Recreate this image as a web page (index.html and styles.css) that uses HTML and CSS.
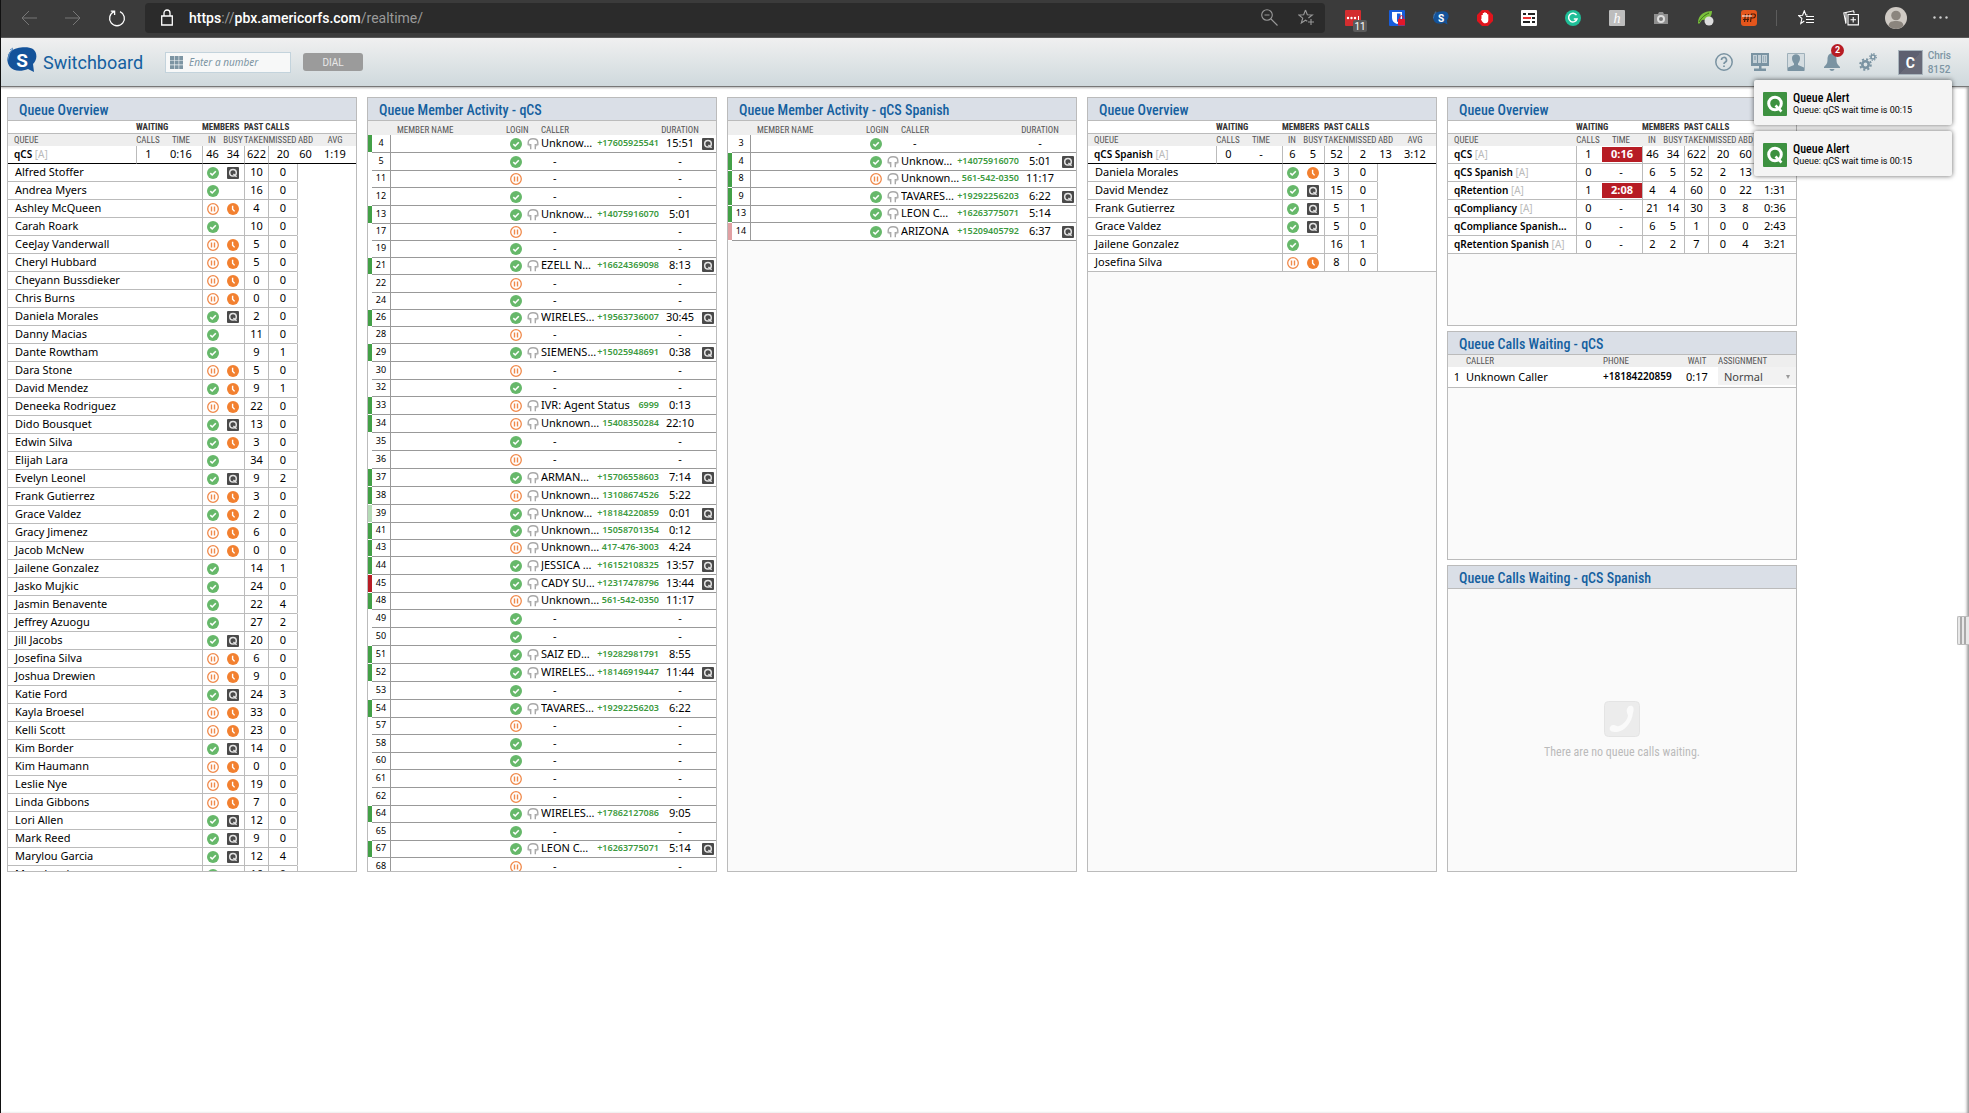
FILE: index.html
```html
<!DOCTYPE html>
<html lang="en">

<head>
    <meta charset="UTF-8">
    <meta name="viewport" content="width=device-width, initial-scale=1.0">
    <title>Switchboard</title>
    <link rel="stylesheet" href="styles.css">
</head>

<body>
    <!-- Shared icons -->
    <svg class="icon-defs" width="0" height="0" aria-hidden="true">
        <symbol id="i-check" viewBox="0 0 12 12">
            <circle cx="6" cy="6" r="6" fill="#66b86a" />
            <path d="M3.3 6.2 5.2 8 8.8 4.3" fill="none" stroke="#fff" stroke-width="1.6" />
        </symbol>
        <symbol id="i-pause" viewBox="0 0 12 12">
            <circle cx="6" cy="6" r="5.3" fill="#fff" stroke="#f08a4b" stroke-width="1.3" />
            <path d="M4.5 3.5v5M7.5 3.5v5" stroke="#f08a4b" stroke-width="1.4" />
        </symbol>
        <symbol id="i-clock" viewBox="0 0 12 12">
            <circle cx="6" cy="6" r="6" fill="#f28030" />
            <path d="M5.6 2.8v3.4l2 2.2" fill="none" stroke="#fff" stroke-width="1.4" />
        </symbol>
        <symbol id="i-queue" viewBox="0 0 12 12">
            <rect width="12" height="12" rx="1" fill="#4a4a4a" />
            <circle cx="6" cy="5.8" r="3.3" fill="none" stroke="#e4e4e4" stroke-width="1.5" />
            <path d="M6.4 7 9.6 9.8" stroke="#e4e4e4" stroke-width="1.4" />
        </symbol>
        <symbol id="i-headset" viewBox="0 0 12 12">
            <path d="M3.7 11.2V6.6H1.2V4.5C1.2 2 3 .8 6 .8s4.8 1.2 4.8 3.7v2.1H8.3v4.6" fill="none" stroke="#a8a8a8" stroke-width="1.4" />
            <path d="M2 5.5v2.3h1.5M10 5.5v2.3H8.5" fill="none" stroke="#bbb" stroke-width="1" />
        </symbol>
        <symbol id="i-alert" viewBox="0 0 24 24">
            <rect width="24" height="24" rx="1" fill="#3d9140" />
            <circle cx="12" cy="11.5" r="6.3" fill="none" stroke="#fff" stroke-width="3" />
            <path d="M12.5 13.5 18.5 19.5" stroke="#fff" stroke-width="2.6" />
        </symbol>
        <symbol id="i-bubble" viewBox="0 0 30 26">
            <path d="M4 4C9 0 21-1 26 2c4 3 5 10 0 15l1 8-6-3C14 25 6 24 3 20-1 15 0 8 4 4z" fill="#14539a" />
            <path d="M1 8l5-6M.5 14 3 5M3 3l3-2" stroke="#5b8cc0" stroke-width="1" />
        </symbol>
    </svg>

    <div class="browser-bar">
        <button class="nav-button" aria-label="Back"><svg width="16" height="16" viewBox="0 0 16 16" fill="none" stroke="#777"><path d="M16 8H1M8 1 1 8l7 7" /></svg></button>
        <button class="nav-button" aria-label="Forward"><svg width="16" height="16" viewBox="0 0 16 16" fill="none" stroke="#777"><path d="M0 8h15M8 1l7 7-7 7" /></svg></button>
        <button class="nav-button reload" aria-label="Reload"><svg width="18" height="18" viewBox="0 0 18 18" fill="none" stroke="#fff" stroke-width="1.3"><path d="M6 2.6A7.4 7.4 0 1 0 12 2.6M6.6 6V2.2H2.8" /></svg></button>
        <div class="address">
            <svg width="12" height="17" viewBox="0 0 12 17" fill="none" stroke="#fff" stroke-width="1.3"><path d="M.7 7h10.6v9H.7zM3 7V4a3 3 0 0 1 6 0v3" /></svg>
            <span class="url"><b>https</b>://<b>pbx.americorfs.com</b>/realtime/</span>
            <svg width="17" height="17" viewBox="0 0 17 17" fill="none" stroke="#999" stroke-width="1.1"><circle cx="6" cy="6" r="5.3" /><path d="M3.5 6h5M10 10l6.5 6.5" /></svg>
            <svg width="17" height="17" viewBox="0 0 17 17" fill="none" stroke="#999" stroke-width="1.1"><path d="M7.5 1 9.3 5.8l5 .2-3.9 3M7.5 1 5.7 5.8.8 6l3.9 3.1L3.3 14l4.2-2.8 1.8 1.1M13 10v6M10 13h6" /></svg>
        </div>
        <div class="extensions">
            <button aria-label="Passwords"><svg width="22" height="22" viewBox="0 0 22 22"><rect width="16" height="16" rx="1" fill="#d32d2f" /><g fill="#fff"><circle cx="3" cy="8" r="1.2" /><circle cx="6.5" cy="8" r="1.2" /><circle cx="10" cy="8" r="1.2" /><path d="M13 6h1v4h-1z" /></g><rect x="8" y="10" width="14" height="12" rx="2" fill="#5a5a5a" /><text x="15" y="20" class="ext-count">11</text></svg></button>
            <button aria-label="Vault"><svg width="16" height="16" viewBox="0 0 16 16"><rect width="16" height="16" rx="1" fill="#175ddc" /><path d="M3 2h10v6c0 3-2 5-5 6-3-1-5-3-5-6z" fill="#fff" /><path d="M8 3.5h3.5V8c0 2-1 3-3.5 4z" fill="#175ddc" /><rect x="9" y="9" width="7" height="6.5" fill="#e3172a" /><path d="M10.7 9V7.5a1.8 1.8 0 0 1 3.6 0V9" fill="none" stroke="#e3172a" /></svg></button>
            <button aria-label="Switchboard"><svg width="16" height="14" viewBox="0 0 30 26"><use href="#i-bubble" /><text x="15" y="20" class="bubble-letter">S</text></svg></button>
            <button aria-label="Blocker"><svg width="16" height="16" viewBox="0 0 16 16"><path d="M5 0h6l5 5v6l-5 5H5l-5-5V5z" fill="#e0141c" /><path d="M4.5 8.5V5h1.3V3h1.4v-.8h1.4V3H10v1.3h1.3v6c0 2-1.2 3-3 3s-2.6-.7-4.3-3.8z" fill="#fff" /></svg></button>
            <button aria-label="Reader"><svg width="16" height="16" viewBox="0 0 16 16"><rect width="16" height="16" rx="1" fill="#fff" /><path d="M2 4h3M7 4h7M2 12h7M11 12h3" stroke="#222" stroke-width="2" /><path d="M2 8h8" stroke="#e33" stroke-width="2" /><path d="M11 8h3" stroke="#222" stroke-width="2" /></svg></button>
            <button aria-label="Writing"><svg width="16" height="16" viewBox="0 0 16 16"><circle cx="8" cy="8" r="8" fill="#1fbf98" /><path d="M11.5 5.2A4.3 4.3 0 1 0 12 9H8.8" fill="none" stroke="#fff" stroke-width="1.5" /></svg></button>
            <button aria-label="Coupons"><svg width="16" height="16" viewBox="0 0 16 16"><rect width="16" height="16" rx="1" fill="#bdbdbd" /><text x="8" y="13" class="coupon-letter">h</text></svg></button>
            <button aria-label="Capture"><svg width="16" height="16" viewBox="0 0 16 16" fill="#8f8f8f"><path d="M1 4h4l1-2h4l1 2h4v10H1z" /><circle cx="8" cy="9" r="4" fill="#ddd" /><circle cx="8" cy="9" r="2" fill="#777" /></svg></button>
            <button aria-label="Leaf"><svg width="17" height="16" viewBox="0 0 17 16"><path d="M1 13C1 5 7 1 15 1c0 6-4 9-10 9l-3 4z" fill="#7ac03c" /><path d="M2 12C5 7 8 5 12 3" stroke="#3b6b1c" fill="none" /><circle cx="12" cy="11" r="4.5" fill="#ddd" /></svg></button>
            <button aria-label="Proxy"><svg width="16" height="16" viewBox="0 0 16 16"><rect width="16" height="16" rx="3" fill="#e4561c" /><path d="M4.5 4 3.5 12M7.5 4 6.5 12M2 9.5h6M9.5 12l1-8h2.5c2 0 2 4-1 4h-2" stroke="#4a1c08" stroke-width="1.2" fill="none" /><path d="M1 6h10" stroke="#fff" /></svg></button>
        </div>
        <div class="browser-tools">
            <button aria-label="Favorites"><svg width="16" height="15" viewBox="0 0 16 15" fill="none" stroke="#fff" stroke-width="1.1"><path d="M9.5 5 7.8 5 6.3.8 4.6 5.2.5 5.5l3.4 3L2.8 13.5l3.5-2.5M8 6.5h8M8 9.5h8M8 12.5h8" /></svg></button>
            <button aria-label="Collections"><svg width="16" height="16" viewBox="0 0 16 16" fill="none" stroke="#fff" stroke-width="1.1"><path d="M5 4.5h10.4v10.4H5zM10.2 7v5.5M7.5 9.7H13M3.5 12.5 2.8 13 .8 3 10.6.8l.6 2.5M3 13V2.5" /></svg></button>
            <button aria-label="Profile"><svg width="22" height="22" viewBox="0 0 22 22"><circle cx="11" cy="11" r="11" fill="#cfcac4" /><circle cx="11" cy="8.5" r="4.8" fill="#8b857e" /><path d="M3.5 19C4 14.5 7 14 11 14s7 .5 7.5 5a11 11 0 0 1-15 0z" fill="#8b857e" /></svg></button>
            <button aria-label="More"><svg width="15" height="3" viewBox="0 0 15 3" fill="#ccc"><circle cx="1.5" cy="1.5" r="1.2" /><circle cx="7.5" cy="1.5" r="1.2" /><circle cx="13.5" cy="1.5" r="1.2" /></svg></button>
        </div>
    </div>

    <header class="app-header">
        <svg class="logo" width="30" height="26" viewBox="0 0 30 26"><use href="#i-bubble" /><text x="15" y="20" class="bubble-letter">S</text></svg>
        <h1>Switchboard</h1>
        <label class="number-box">
            <svg width="13" height="13" viewBox="0 0 13 13" fill="#7d95a3"><path d="M0 0h4v4H0zM4.6 0h4v4h-4zM9.2 0h3.8v4H9.2zM0 4.6h4v4H0zM4.6 4.6h4v4h-4zM9.2 4.6h3.8v4H9.2zM0 9.2h4V13H0zM4.6 9.2h4V13h-4zM9.2 9.2h3.8V13H9.2z" /></svg>
            <input type="text" placeholder="Enter a number" aria-label="Enter a number">
        </label>
        <button class="dial-button">DIAL</button>
        <div class="header-tools">
            <button aria-label="Help"><svg width="18" height="18" viewBox="0 0 18 18" fill="none" stroke="#7a93a2" stroke-width="1.5"><circle cx="9" cy="9" r="8.2" /><path d="M6.5 7a2.5 2.5 0 1 1 3.6 2.2C9.3 9.6 9 10 9 11M9 12.4v1.5" stroke-width="1.7" /></svg></button>
            <button aria-label="Display"><svg width="18" height="18" viewBox="0 0 18 18" fill="#7a93a2"><path d="M0 0h18v13H0zM8 13h2.5v3H8zM3 15.5h12V18H3z" /><path d="M2 2h4v8H2zM7 2h3v8H7zM11 2h5v8h-5z" fill="#c3cfd6" /><path d="M3 4h2M3 6h2M12 4h1M14 4h1M12 6h1M14 6h1M12 8h1M14 8h1" stroke="#7a93a2" /></svg></button>
            <button aria-label="Contacts"><svg width="18" height="18" viewBox="0 0 18 18"><path d="M.5.5h17v17H.5z" fill="#d5dde1" stroke="#9fb0ba" /><path d="M5 5c0-5 8-5 8 0 0 3-1 4-2 5.5v1.5l6 2.5V18H1v-3.5L7 12v-1.5C6 9 5 8 5 5z" fill="#7a93a2" /></svg></button>
            <button class="bell" aria-label="Alerts"><svg width="16" height="18" viewBox="0 0 16 18" fill="#7a93a2"><path d="M8 0c3.5 1 4.5 3 4.5 6.5 0 4 1 5 3.5 7.5v1H0v-1c2.5-2.5 3.5-3.5 3.5-7.5C3.5 3 4.5 1 8 0zM5.5 16h5c-.5 2.5-4.5 2.5-5 0z" /></svg><span class="badge">2</span></button>
            <button aria-label="Settings"><svg width="18" height="18" viewBox="0 0 18 18" fill="none" stroke="#7a93a2"><circle cx="6.5" cy="11.5" r="3.2" stroke-width="2.6" /><circle cx="6.5" cy="11.5" r="5.3" stroke-width="2" stroke-dasharray="2.1 2.06" /><circle cx="14" cy="4" r="2" stroke-width="1.6" /><circle cx="14" cy="4" r="3.3" stroke-width="1.2" stroke-dasharray="1.3 1.29" /></svg></button>
        </div>
        <div class="user">
            <span class="avatar">C</span>
            <div class="user-info"><span>Chris</span><span>8152</span></div>
        </div>

        <!-- Alert popups under the bell -->
        <div class="alerts">
            <div class="alert">
                <svg width="24" height="24"><use href="#i-alert" /></svg>
                <div><strong>Queue Alert</strong><p>Queue: qCS wait time is 00:15</p></div>
            </div>
            <div class="alert">
                <svg width="24" height="24"><use href="#i-alert" /></svg>
                <div><strong>Queue Alert</strong><p>Queue: qCS wait time is 00:15</p></div>
            </div>
        </div>
    </header>

    <main class="dashboard">
        <section class="panel">
            <h2>Queue Overview</h2>
            <table class="overview" id="overviewQcs"></table>
        </section>
        <section class="panel">
            <h2>Queue Member Activity - qCS</h2>
            <table class="activity" id="activityQcs"></table>
        </section>
        <section class="panel">
            <h2>Queue Member Activity - qCS Spanish</h2>
            <table class="activity" id="activitySpanish"></table>
        </section>
        <section class="panel">
            <h2>Queue Overview</h2>
            <table class="overview" id="overviewSpanish"></table>
        </section>
        <div class="panel-stack">
            <section class="panel">
                <h2>Queue Overview</h2>
                <table class="overview" id="overviewAll"></table>
            </section>
            <section class="panel">
                <h2>Queue Calls Waiting - qCS</h2>
                <table class="waiting">
                    <colgroup><col class="w-num"><col><col class="w-phone"><col class="w-wait"><col class="w-assign"></colgroup>
                    <thead>
                        <tr><th></th><th>CALLER</th><th>PHONE</th><th class="center">WAIT</th><th>ASSIGNMENT</th></tr>
                    </thead>
                    <tbody>
                        <tr>
                            <td class="center">1</td>
                            <td>Unknown Caller</td>
                            <td class="phone">+18184220859</td>
                            <td class="center">0:17</td>
                            <td class="assign"><select aria-label="Assignment"><option>Normal</option><option>High</option></select></td>
                        </tr>
                    </tbody>
                </table>
            </section>
            <section class="panel">
                <h2>Queue Calls Waiting - qCS Spanish</h2>
                <div class="empty">
                    <svg width="36" height="36" viewBox="0 0 36 36"><rect x=".5" y=".5" width="35" height="35" rx="4" fill="#ececec" stroke="#e4e4e4" /><path d="M23 8c1-3 3-4 5-3 2 1 2 4 1 7-1 9-8 18-16 19-3 0-6 0-7-2-1-3 1-5 4-5 2 0 3 2 5 1 5-2 8-6 9-10 0-2-2-4-1-7z" fill="#fafafa" /></svg>
                    <p>There are no queue calls waiting.</p>
                </div>
            </section>
        </div>
        <button class="drawer-handle" aria-label="Open drawer"></button>
    </main>

    <script src="script.js"></script>
</body>

</html>
```
FILE: styles.css
```css
* {
    box-sizing: border-box;
}

body {
    margin: 0;
    border-left: 1px solid #111;
    background-color: #fff;
    color: #000;
    font-family: "Noto Sans", "Open Sans", sans-serif;
    font-size: 11px;
    min-height: 100vh;
    display: flex;
    flex-direction: column;
}

button {
    border: none;
    padding: 0;
    background: none;
    font-family: inherit;
    cursor: pointer;
}

svg {
    display: block;
    flex-shrink: 0;
}

.icon-defs {
    position: absolute;
}

/* Browser bar */
.browser-bar {
    height: 38px;
    display: flex;
    align-items: center;
    padding: 0 6px 2px 6px;
    background-color: #3b3b3b;
    border-bottom: 1px solid #5a5a5a;
}

.browser-bar button {
    display: flex;
    justify-content: center;
    align-items: center;
}

.nav-button {
    width: 44px;
}

.address {
    flex: 1;
    height: 30px;
    display: flex;
    align-items: center;
    gap: 20px;
    margin: 0 6px;
    padding: 0 10px 0 16px;
    background-color: #2b2b2b;
    border-radius: 4px;
}

.url {
    flex: 1;
    margin-left: -4px;
    font-family: Roboto, sans-serif;
    font-size: 14px;
    color: #9a9a9a;
}

.url b {
    font-weight: 500;
    color: #fff;
}

.extensions {
    display: flex;
    border-right: 1px solid #5c5c5c;
    padding-right: 5px;
    margin-right: 6px;
    height: 16px;
}

.extensions button {
    width: 44px;
}

.extensions button:first-child {
    padding: 6px 0 0 6px;
}

.ext-count {
    fill: #fff;
    font: 10px Roboto, sans-serif;
    text-anchor: middle;
}

.bubble-letter {
    fill: #fff;
    font: bold 19px Roboto, sans-serif;
    text-anchor: middle;
}

.coupon-letter {
    fill: #fff;
    font: italic 14px "Liberation Serif", serif;
    text-anchor: middle;
}

.browser-tools {
    display: flex;
}

.browser-tools button {
    width: 45px;
}

/* Application header */
.app-header {
    position: relative;
    height: 49px;
    display: flex;
    align-items: center;
    padding: 0 18px 0 6px;
    background: linear-gradient(#f0f0f0, #cfd9dd);
    border-bottom: 1px solid #777;
    box-shadow: 0 1px 2px rgba(0, 0, 0, 0.25);
}

.logo {
    margin-bottom: 4px;
}

.app-header h1 {
    margin: 0 0 0 6px;
    font-family: Roboto, sans-serif;
    font-size: 18px;
    font-weight: 400;
    color: #14609f;
}

.number-box {
    width: 126px;
    height: 21px;
    margin-left: 22px;
    padding-left: 4px;
    display: flex;
    align-items: center;
    gap: 6px;
    background-color: #f7f8f8;
    border: 1px solid #c3d3dc;
}

.number-box input {
    flex: 1;
    min-width: 0;
    border: none;
    padding: 0;
    outline: none;
    background: none;
    font: italic 10px "Noto Sans", sans-serif;
}

.number-box input::placeholder {
    color: #7d95a3;
}

.dial-button {
    width: 60px;
    height: 18px;
    margin-left: 12px;
    background-color: #9b9b9b;
    border-radius: 3px;
    color: #e8e8e8;
    font-family: Roboto, sans-serif;
    font-size: 10px;
}

.header-tools {
    margin-left: auto;
    display: flex;
    align-items: center;
    gap: 18px;
}

.header-tools button {
    width: 18px;
    display: flex;
    justify-content: center;
}

.bell {
    position: relative;
}

.badge {
    position: absolute;
    top: -9px;
    left: 8px;
    width: 13px;
    height: 13px;
    border-radius: 50%;
    background-color: #b71c24;
    color: #fff;
    font: bold 9px/13px Roboto, sans-serif;
}

.user {
    display: flex;
    align-items: center;
    gap: 5px;
    width: 53px;
    margin-left: 21px;
    font-family: Roboto, sans-serif;
    color: #7d95a3;
}

.avatar {
    width: 25px;
    height: 25px;
    border: 1px solid #a9b5bd;
    background: linear-gradient(135deg, #5d6070 50%, #686a78 50%);
    color: #fff;
    font-size: 14px;
    font-weight: 700;
    line-height: 24px;
    text-align: center;
}

.user-info {
    display: flex;
    flex-direction: column;
    padding-top: 2px;
    font-size: 10px;
    font-weight: 500;
    line-height: 14px;
}

.alerts {
    position: absolute;
    z-index: 2;
    top: 42px;
    right: 17px;
    width: 198px;
    display: flex;
    flex-direction: column;
    gap: 6px;
}

.alert {
    height: 45px;
    padding: 2px 9px 0;
    display: flex;
    align-items: center;
    gap: 6px;
    background-color: #f4f4f4;
    border-radius: 2px;
    box-shadow: 0 0 5px rgba(0, 0, 0, 0.6);
    font-family: Roboto, sans-serif;
    font-size: 9px;
    line-height: 12px;
}

.alert strong {
    display: block;
    font-family: "Roboto Condensed", Roboto, sans-serif;
    font-size: 12px;
    font-weight: 500;
}

.alert p {
    margin: 0;
}

/* Dashboard */
.dashboard {
    position: relative;
    flex: 1;
    display: grid;
    grid-template-columns: repeat(5, 1fr);
    grid-template-rows: calc(100vh - 338px);
    gap: 10px;
    padding: 10px 172px 0 6px;
    box-shadow: inset -3px 0 3px -1px #999;
}

.panel {
    min-width: 0;
    min-height: 0;
    overflow: hidden;
    display: flex;
    flex-direction: column;
    background-color: #fafafa;
    border: 1px solid #bbb;
}

.panel-stack {
    min-width: 0;
    display: grid;
    grid-template-rows: 229fr 229fr 307fr;
    gap: 5px;
}

.panel h2 {
    flex-shrink: 0;
    margin: 0;
    padding: 2px 0 0 11px;
    background-color: #dadfe7;
    border-bottom: 1px solid #bbb;
    font-family: "Roboto Condensed", Roboto, sans-serif;
    font-size: 14px;
    font-weight: 500;
    line-height: 20px;
    color: #155f9f;
}

table {
    width: 100%;
    table-layout: fixed;
    border-collapse: separate;
    border-spacing: 0;
    background-color: #fff;
}

th,
td {
    padding: 0;
    font-weight: 400;
    text-align: center;
    white-space: nowrap;
}

th {
    background-color: #eee;
    font-family: "Roboto Condensed", Roboto, sans-serif;
    font-size: 9px;
    line-height: 12px;
    color: #555;
}

td {
    padding-bottom: 2px;
}

td svg {
    width: 12px;
    height: 12px;
    margin: 2px auto 0;
}

/* Queue overview tables */
.c-calls,
.c-taken {
    width: 24px;
}

.c-time,
.c-avg {
    width: 42px;
}

.c-in {
    width: 20px;
}

.c-busy {
    width: 22px;
}

.c-missed {
    width: 29px;
}

.c-abd {
    width: 17px;
}

.overview th {
    height: 12px;
}

.overview .groups th {
    height: 13px;
    background-color: #fff;
    border-bottom: 1px solid #bbb;
    font-weight: 700;
    text-align: left;
    color: #333;
}

.overview .name {
    text-align: left;
    padding-left: 6px;
}

.overview td {
    height: 18px;
    line-height: 15px;
    border-bottom: 1px solid #bbb;
}

.overview td svg {
    margin-top: 3px;
}

.overview td.name {
    overflow: hidden;
    text-overflow: ellipsis;
}

.overview .member .name {
    padding-left: 7px;
}

.overview .queue .name {
    padding-bottom: 0;
    font-size: 10px;
    font-weight: 600;
}

.overview .name span {
    font-weight: 400;
    color: #bbb;
}

.overview td.line {
    border-left: 1px solid #bbb;
}

.overview.single .queue td {
    border-bottom-color: #000;
}

.overview .member td.blank {
    border-bottom-color: transparent;
    border-left: 1px solid #bbb;
}

.overview .member:last-child td.blank {
    border-bottom-color: #bbb;
}

.late {
    display: block;
    height: 15px;
    margin: 1px 0 -1px 2px;
    background-color: #b71c24;
    color: #fff;
    font-weight: 700;
    line-height: 14px;
}

/* Queue member activity tables */
.a-status {
    width: 4px;
}

.a-ext {
    width: 19px;
}

.a-login {
    width: 20px;
}

.a-headset {
    width: 13px;
}

.a-caller {
    width: 121px;
}

.a-duration {
    width: 40px;
}

.a-queue {
    width: 16px;
}

.activity th {
    height: 14px;
    padding-top: 4px;
    line-height: 10px;
}

.activity td {
    height: 18px;
    line-height: 15px;
    border-bottom: 1px solid #999;
}

.activity .compact td {
    height: 17px;
    line-height: 14px;
}

.activity td.status {
    border-bottom-color: #fff;
}

.status.green {
    background-color: #43a047;
}

.status.pale {
    background-color: #b4dab6;
}

.status.red {
    background-color: #b71c24;
}

.status.pink {
    background-color: #e0a0a3;
}

.activity .ext {
    border-right: 1px solid #999;
    font-size: 9px;
}

.activity th.left {
    padding-left: 6px;
    text-align: left;
}

.activity th.caller-head {
    padding-left: 2px;
    text-align: left;
}

.caller {
    display: flex;
    align-items: center;
    gap: 1px;
    padding: 0 1px 0 2px;
}

.caller span {
    flex: 1;
    overflow: hidden;
    text-overflow: ellipsis;
    text-align: left;
}

.caller b {
    color: #3c9a40;
    font-size: 9px;
    font-weight: 600;
}

.caller.none {
    padding-left: 14px;
}

/* Calls waiting table */
.w-num {
    width: 18px;
}

.w-phone {
    width: 73px;
}

.w-wait {
    width: 42px;
}

.w-assign {
    width: 78px;
}

.waiting th {
    height: 12px;
    text-align: left;
}

.waiting td {
    height: 21px;
    border-bottom: 1px solid #bbb;
    text-align: left;
}

.waiting .center {
    text-align: center;
}

.waiting .phone {
    font-size: 10px;
    font-weight: 600;
}

.waiting .assign {
    position: relative;
}

.waiting .assign::after {
    content: "";
    position: absolute;
    top: 8px;
    right: 6px;
    border: 2px solid transparent;
    border-top: 4px solid #999;
    border-bottom: none;
}

.waiting select {
    display: block;
    width: 100%;
    height: 18px;
    padding: 0 6px;
    appearance: none;
    border: none;
    background-color: #f2f2f2;
    color: #444;
    font: 11px "Noto Sans", "Open Sans", sans-serif;
}

.empty {
    flex: 1;
    display: flex;
    flex-direction: column;
    align-items: center;
    justify-content: center;
    gap: 9px;
    font-family: "Roboto Condensed", Roboto, sans-serif;
    font-size: 12px;
    line-height: 13px;
    color: #bbb;
}

.empty p {
    margin: 0;
}

.drawer-handle {
    position: absolute;
    top: 529px;
    right: 0;
    width: 12px;
    height: 29px;
    border: 1px solid #bbb;
    border-right: none;
    border-radius: 2px 0 0 2px;
    background: linear-gradient(90deg, #e8e8e8 2px, #aaa 2px, #aaa 4px, #e8e8e8 4px, #e8e8e8 6px, #aaa 6px, #aaa 8px, #e8e8e8 8px);
}
```
FILE: script.js
```js
const icon = name => name ? `<svg><use href="#i-${name}"/></svg>` : '';

const overviewHead = `
    <colgroup><col><col class="c-calls"><col class="c-time"><col class="c-in"><col class="c-busy"><col class="c-taken"><col class="c-missed"><col class="c-abd"><col class="c-avg"></colgroup>
    <thead>
        <tr class="groups"><th></th><th colspan="2">WAITING</th><th colspan="2">MEMBERS</th><th colspan="4">PAST CALLS</th></tr>
        <tr><th class="name">QUEUE</th><th>CALLS</th><th>TIME</th><th>IN</th><th>BUSY</th><th>TAKEN</th><th>MISSED</th><th>ABD</th><th>AVG</th></tr>
    </thead>`;

// long names are shortened and lose the [A] tag
function queueName(name) {
    return name.length > 18 ? name.slice(0, 19) + '...' : `${name} <span>[A]</span>`;
}

// name, calls, time, in, busy, taken, missed, abandoned, average, late
function queueRow([name, calls, time, inn, busy, taken, missed, abd, avg, late]) {
    return `<tr class="queue"><td class="name">${queueName(name)}</td><td class="line">${calls}</td>
        <td>${late ? `<span class="late">${time}</span>` : time}</td><td class="line">${inn}</td><td>${busy}</td>
        <td class="line">${taken}</td><td class="line">${missed}</td><td>${abd}</td><td>${avg}</td></tr>`;
}

// name, login icon, busy icon, taken, missed
function memberRow([name, login, busy, taken, missed]) {
    return `<tr class="member"><td class="name" colspan="3">${name}</td><td class="line">${icon(login)}</td><td>${icon(busy)}</td>
        <td class="line">${taken}</td><td class="line">${missed}</td><td class="blank" colspan="2"></td></tr>`;
}

function renderOverview(id, queues, members) {
    const table = document.getElementById(id);
    table.innerHTML = overviewHead + '<tbody>' + queues.map(queueRow).join('') + members.map(memberRow).join('') + '</tbody>';
    table.classList.toggle('single', members.length > 0);
}

// extension, login icon, caller, phone, duration, queue call, status colour, compact
function activityRow([ext, login, caller, phone, duration, queued, status, compact]) {
    return `<tr class="${compact ? 'compact' : ''}"><td class="status ${status || ''}"></td><td class="ext">${ext}</td><td></td>
        <td>${icon(login)}</td><td>${caller ? icon('headset') : ''}</td>
        <td><div class="caller ${caller ? '' : 'none'}"><span>${caller || '-'}</span>${phone ? `<b>${phone}</b>` : ''}</div></td>
        <td>${duration || '-'}</td><td>${queued ? icon('queue') : ''}</td></tr>`;
}

function renderActivity(id, rows) {
    document.getElementById(id).innerHTML = `
        <colgroup><col class="a-status"><col class="a-ext"><col><col class="a-login"><col class="a-headset"><col class="a-caller"><col class="a-duration"><col class="a-queue"></colgroup>
        <thead><tr><th></th><th></th><th class="left">MEMBER NAME</th><th>LOGIN</th><th></th><th class="caller-head">CALLER</th><th>DURATION</th><th></th></tr></thead>
        <tbody>${rows.map(activityRow).join('')}</tbody>`;
}

const C = 'check', P = 'pause', T = 'clock', Q = 'queue', G = 'green';

renderOverview('overviewQcs', [['qCS', 1, '0:16', 46, 34, 622, 20, 60, '1:19']], [
    ['Alfred Stoffer', C, Q, 10, 0],
    ['Andrea Myers', C, '', 16, 0],
    ['Ashley McQueen', P, T, 4, 0],
    ['Carah Roark', C, '', 10, 0],
    ['CeeJay Vanderwall', P, T, 5, 0],
    ['Cheryl Hubbard', P, T, 5, 0],
    ['Cheyann Bussdieker', P, T, 0, 0],
    ['Chris Burns', P, T, 0, 0],
    ['Daniela Morales', C, Q, 2, 0],
    ['Danny Macias', C, '', 11, 0],
    ['Dante Rowtham', C, '', 9, 1],
    ['Dara Stone', P, T, 5, 0],
    ['David Mendez', C, T, 9, 1],
    ['Deneeka Rodriguez', P, T, 22, 0],
    ['Dido Bousquet', C, Q, 13, 0],
    ['Edwin Silva', C, T, 3, 0],
    ['Elijah Lara', C, '', 34, 0],
    ['Evelyn Leonel', C, Q, 9, 2],
    ['Frank Gutierrez', P, T, 3, 0],
    ['Grace Valdez', C, T, 2, 0],
    ['Gracy Jimenez', P, T, 6, 0],
    ['Jacob McNew', P, T, 0, 0],
    ['Jailene Gonzalez', C, '', 14, 1],
    ['Jasko Mujkic', C, '', 24, 0],
    ['Jasmin Benavente', C, '', 22, 4],
    ['Jeffrey Azuogu', C, '', 27, 2],
    ['Jill Jacobs', C, Q, 20, 0],
    ['Josefina Silva', P, T, 6, 0],
    ['Joshua Drewien', P, T, 9, 0],
    ['Katie Ford', C, Q, 24, 3],
    ['Kayla Broesel', P, T, 33, 0],
    ['Kelli Scott', P, T, 23, 0],
    ['Kim Border', C, Q, 14, 0],
    ['Kim Haumann', P, T, 0, 0],
    ['Leslie Nye', P, T, 19, 0],
    ['Linda Gibbons', P, T, 7, 0],
    ['Lori Allen', C, Q, 12, 0],
    ['Mark Reed', C, Q, 9, 0],
    ['Marylou Garcia', C, Q, 12, 4],
    ['Mary Lamb', C, '', 16, 0]
]);

renderOverview('overviewSpanish', [['qCS Spanish', 0, '-', 6, 5, 52, 2, 13, '3:12']], [
    ['Daniela Morales', C, T, 3, 0],
    ['David Mendez', C, Q, 15, 0],
    ['Frank Gutierrez', C, Q, 5, 1],
    ['Grace Valdez', C, Q, 5, 0],
    ['Jailene Gonzalez', C, '', 16, 1],
    ['Josefina Silva', P, T, 8, 0]
]);

renderOverview('overviewAll', [
    ['qCS', 1, '0:16', 46, 34, 622, 20, 60, '1:19', true],
    ['qCS Spanish', 0, '-', 6, 5, 52, 2, 13, '3:12'],
    ['qRetention', 1, '2:08', 4, 4, 60, 0, 22, '1:31', true],
    ['qCompliancy', 0, '-', 21, 14, 30, 3, 8, '0:36'],
    ['qCompliance Spanish', 0, '-', 6, 5, 1, 0, 0, '2:43'],
    ['qRetention Spanish', 0, '-', 2, 2, 7, 0, 4, '3:21']
], []);

renderActivity('activityQcs', [
    [4, C, 'Unknown Caller', '+17605925541', '15:51', true, G],
    [5, C],
    [11, P, '', '', '', false, '', true],
    [12, C],
    [13, C, 'Unknown Caller', '+14075916070', '5:01', false, G],
    [17, P, '', '', '', false, '', true],
    [19, C, '', '', '', false, '', true],
    [21, C, 'EZELL NORMAN', '+16624369098', '8:13', true, G, true],
    [22, P],
    [24, C, '', '', '', false, '', true],
    [26, C, 'WIRELESS CALLER', '+19563736007', '30:45', true, G, true],
    [28, P, '', '', '', false, '', true],
    [29, C, 'SIEMENS CORP', '+15025948691', '0:38', true, G],
    [30, P],
    [32, C, '', '', '', false, '', true],
    [33, P, 'IVR: Agent Status', '6999', '0:13', false, G],
    [34, P, 'Unknown Caller', '15408350284', '22:10', false, G],
    [35, C],
    [36, P],
    [37, C, 'ARMANDO', '+15706558603', '7:14', true, G],
    [38, P, 'Unknown Caller', '13108674526', '5:22', false, G],
    [39, C, 'Unknown Caller', '+18184220859', '0:01', true, 'pale'],
    [41, C, 'Unknown Caller', '15058701354', '0:12', false, G, true],
    [43, P, 'Unknown Caller', '417-476-3003', '4:24', false, G, true],
    [44, C, 'JESSICA MILLER', '+16152108325', '13:57', true, G],
    [45, C, 'CADY SUMMERS', '+12317478796', '13:44', true, 'red'],
    [48, P, 'Unknown Caller', '561-542-0350', '11:17', false, G, true],
    [49, C],
    [50, C],
    [51, C, 'SAIZ EDWARD', '+19282981791', '8:55', false, G],
    [52, C, 'WIRELESS CALLER', '+18146919447', '11:44', true, G],
    [53, C],
    [54, C, 'TAVARES CITY', '+19292256203', '6:22', false, G],
    [57, P, '', '', '', false, '', true],
    [58, C],
    [60, C, '', '', '', false, '', true],
    [61, P],
    [62, P],
    [64, C, 'WIRELESS CALLER', '+17862127086', '9:05', false, G, true],
    [65, C],
    [67, C, 'LEON COWAN', '+16263775071', '5:14', true, G, true],
    [68, P]
]);

renderActivity('activitySpanish', [
    [3, C],
    [4, C, 'Unknown Caller', '+14075916070', '5:01', true, G],
    [8, P, 'Unknown Caller', '561-542-0350', '11:17', false, G, true],
    [9, C, 'TAVARES CITY', '+19292256203', '6:22', true, G],
    [13, C, 'LEON COWAN', '+16263775071', '5:14', false, G, true],
    [14, C, 'ARIZONA', '+15209405792', '6:37', true, 'pink']
]);
```
